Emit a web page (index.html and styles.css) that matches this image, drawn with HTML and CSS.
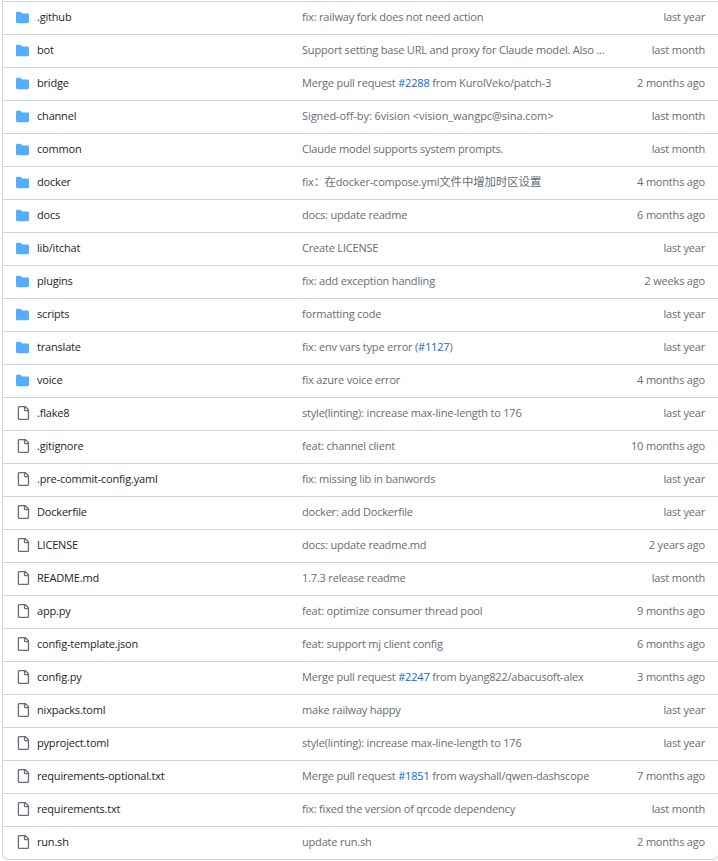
FILE: index.html
```html
<!DOCTYPE html>
<html lang="en">
<head>
<meta charset="utf-8">
<title>Files</title>
<link rel="stylesheet" href="styles.css">
</head>
<body>
<svg class="defs" width="0" height="0" aria-hidden="true">
<symbol id="folder" viewBox="0 0 16 16"><path d="M1.75 1A1.75 1.75 0 0 0 0 2.75v10.5C0 14.216.784 15 1.75 15h12.5A1.75 1.75 0 0 0 16 13.25v-8.5A1.75 1.75 0 0 0 14.25 3H7.5a.25.25 0 0 1-.2-.1l-.9-1.2C6.07 1.26 5.55 1 5 1H1.75Z"/></symbol>
<symbol id="file" viewBox="0 0 16 16"><path d="M2 1.75C2 .784 2.784 0 3.75 0h6.586c.464 0 .909.184 1.237.513l2.914 2.914c.329.328.513.773.513 1.237v9.586A1.75 1.75 0 0 1 13.25 16h-9.5A1.75 1.75 0 0 1 2 14.25Zm1.75-.25a.25.25 0 0 0-.25.25v12.5c0 .138.112.25.25.25h9.5a.25.25 0 0 0 .25-.25V6h-2.75A1.75 1.75 0 0 1 9 4.25V1.5Zm6.75.062V4.25c0 .138.112.25.25.25h2.688l-.011-.013-2.914-2.914-.013-.011Z"/></symbol>
</svg>
<div class="box">
<div class="row"><svg class="icon dir"><use href="#folder"/></svg><span class="name">.github</span><span class="msg">fix: railway fork does not need action</span><span class="age">last year</span></div>
<div class="row"><svg class="icon dir"><use href="#folder"/></svg><span class="name">bot</span><span class="msg">Support setting base URL and proxy for Claude model. Also ...</span><span class="age">last month</span></div>
<div class="row"><svg class="icon dir"><use href="#folder"/></svg><span class="name">bridge</span><span class="msg">Merge pull request <a class="issue">#2288</a> from KurolVeko/patch-3</span><span class="age">2 months ago</span></div>
<div class="row"><svg class="icon dir"><use href="#folder"/></svg><span class="name">channel</span><span class="msg wide">Signed-off-by: 6vision &lt;vision_wangpc@sina.com&gt;</span><span class="age">last month</span></div>
<div class="row"><svg class="icon dir"><use href="#folder"/></svg><span class="name">common</span><span class="msg">Claude model supports system prompts.</span><span class="age">last month</span></div>
<div class="row"><svg class="icon dir"><use href="#folder"/></svg><span class="name">docker</span><span class="msg">fix：<span class="cjk">在</span>docker-compose.yml<span class="cjk">文件中增加时区设置</span></span><span class="age">4 months ago</span></div>
<div class="row"><svg class="icon dir"><use href="#folder"/></svg><span class="name">docs</span><span class="msg">docs: update readme</span><span class="age">6 months ago</span></div>
<div class="row"><svg class="icon dir"><use href="#folder"/></svg><span class="name">lib/itchat</span><span class="msg">Create LICENSE</span><span class="age">last year</span></div>
<div class="row"><svg class="icon dir"><use href="#folder"/></svg><span class="name">plugins</span><span class="msg">fix: add exception handling</span><span class="age">2 weeks ago</span></div>
<div class="row"><svg class="icon dir"><use href="#folder"/></svg><span class="name">scripts</span><span class="msg">formatting code</span><span class="age">last year</span></div>
<div class="row"><svg class="icon dir"><use href="#folder"/></svg><span class="name">translate</span><span class="msg">fix: env vars type error (<a class="issue">#1127</a>)</span><span class="age">last year</span></div>
<div class="row"><svg class="icon dir"><use href="#folder"/></svg><span class="name">voice</span><span class="msg">fix azure voice error</span><span class="age">4 months ago</span></div>
<div class="row"><svg class="icon doc"><use href="#file"/></svg><span class="name">.flake8</span><span class="msg">style(linting): increase max-line-length to 176</span><span class="age">last year</span></div>
<div class="row"><svg class="icon doc"><use href="#file"/></svg><span class="name">.gitignore</span><span class="msg">feat: channel client</span><span class="age">10 months ago</span></div>
<div class="row"><svg class="icon doc"><use href="#file"/></svg><span class="name">.pre-commit-config.yaml</span><span class="msg">fix: missing lib in banwords</span><span class="age">last year</span></div>
<div class="row"><svg class="icon doc"><use href="#file"/></svg><span class="name">Dockerfile</span><span class="msg">docker: add Dockerfile</span><span class="age">last year</span></div>
<div class="row"><svg class="icon doc"><use href="#file"/></svg><span class="name">LICENSE</span><span class="msg">docs: update readme.md</span><span class="age">2 years ago</span></div>
<div class="row"><svg class="icon doc"><use href="#file"/></svg><span class="name">README.md</span><span class="msg">1.7.3 release readme</span><span class="age">last month</span></div>
<div class="row"><svg class="icon doc"><use href="#file"/></svg><span class="name">app.py</span><span class="msg">feat: optimize consumer thread pool</span><span class="age">9 months ago</span></div>
<div class="row"><svg class="icon doc"><use href="#file"/></svg><span class="name">config-template.json</span><span class="msg">feat: support mj client config</span><span class="age">6 months ago</span></div>
<div class="row"><svg class="icon doc"><use href="#file"/></svg><span class="name">config.py</span><span class="msg">Merge pull request <a class="issue">#2247</a> from byang822/abacusoft-alex</span><span class="age">3 months ago</span></div>
<div class="row"><svg class="icon doc"><use href="#file"/></svg><span class="name">nixpacks.toml</span><span class="msg">make railway happy</span><span class="age">last year</span></div>
<div class="row"><svg class="icon doc"><use href="#file"/></svg><span class="name">pyproject.toml</span><span class="msg">style(linting): increase max-line-length to 176</span><span class="age">last year</span></div>
<div class="row"><svg class="icon doc"><use href="#file"/></svg><span class="name">requirements-optional.txt</span><span class="msg">Merge pull request <a class="issue">#1851</a> from wayshall/qwen-dashscope</span><span class="age">7 months ago</span></div>
<div class="row"><svg class="icon doc"><use href="#file"/></svg><span class="name">requirements.txt</span><span class="msg">fix: fixed the version of qrcode dependency</span><span class="age">last month</span></div>
<div class="row"><svg class="icon doc"><use href="#file"/></svg><span class="name">run.sh</span><span class="msg">update run.sh</span><span class="age">2 months ago</span></div>
</div>
</body>
</html>
```
FILE: styles.css
```css
html, body { margin: 0; padding: 0; background: #fff; }
html { height: 100%; overflow: hidden; }
body { padding-left: 2px; font: 11px/18px "Open Sans", "Noto Sans CJK SC", sans-serif; letter-spacing: -0.19px; }
.defs { position: absolute; }
.box { box-sizing: border-box; width: 717px; padding-top: 1px; border: 1px solid #d0d7de; border-top: 0; border-radius: 0 0 6px 6px; }
.row { display: grid; grid-template-columns: 14px 272px 1fr auto; align-items: center; height: 33px; box-sizing: border-box; padding: 0 13px 2px; border-top: 1px solid #d0d7de; }
.icon { height: 14px; display: block; }
.dir { width: 13px; height: 13px; fill: #54aeff; }
.doc { width: 14px; fill: #656d76; }
.name { color: #1f2328; padding-left: 7px; white-space: nowrap; }
.msg { color: #656d76; white-space: nowrap; }
.wide { letter-spacing: -0.065px; }
.cjk { font-size: 11.4px; letter-spacing: -0.05px; }
.age { color: #656d76; text-align: right; white-space: nowrap; }
.issue { color: #0969da; }
```
